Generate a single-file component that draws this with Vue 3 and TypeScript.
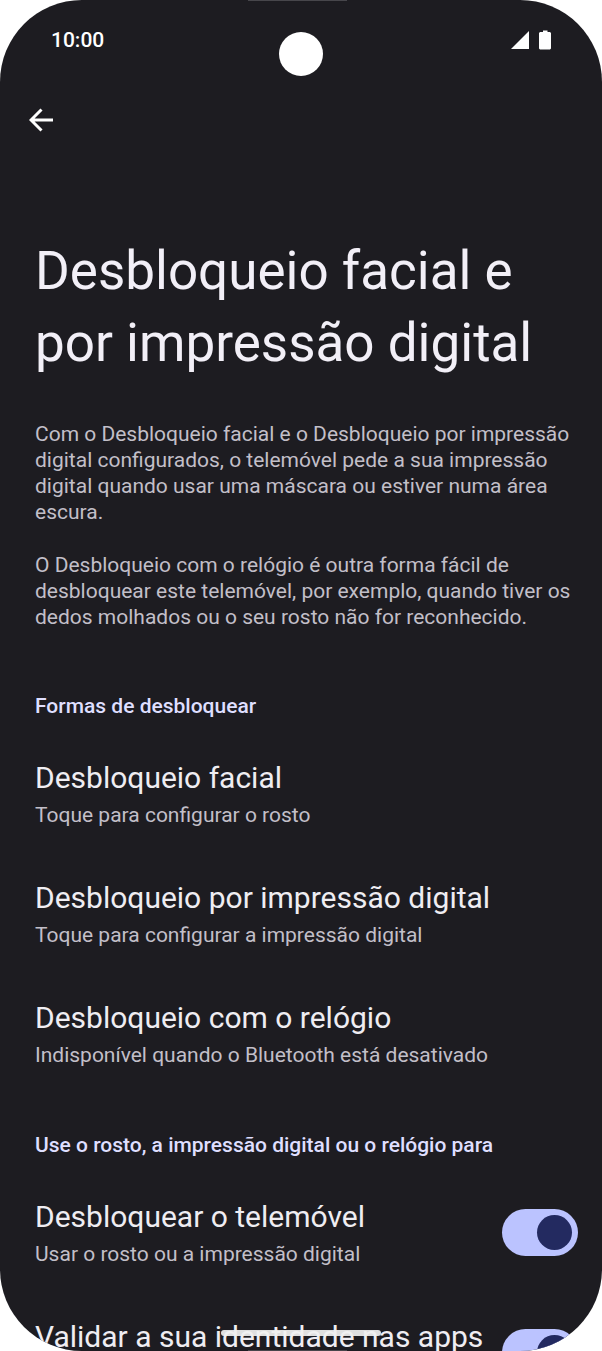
<script setup lang="ts">
import { ref } from 'vue'

interface Method {
  title: string
  summary: string
}
interface Usage {
  id: string
  title: string
  summary?: string
  enabled: boolean
}

const methods: Method[] = [
  { title: 'Desbloqueio facial', summary: 'Toque para configurar o rosto' },
  { title: 'Desbloqueio por impressão digital', summary: 'Toque para configurar a impressão digital' },
  { title: 'Desbloqueio com o relógio', summary: 'Indisponível quando o Bluetooth está desativado' },
]

const usages = ref<Usage[]>([
  { id: 'unlock-phone', title: 'Desbloquear o telemóvel', summary: 'Usar o rosto ou a impressão digital', enabled: true },
  { id: 'verify-apps', title: 'Validar a sua identidade nas apps', enabled: true },
])
</script>

<template>
  <div class="phone">
    <header class="status">
      <time class="clock">10:00</time>
      <div class="status-icons">
        <svg width="18" height="18" viewBox="0 0 18 18" aria-hidden="true"><path d="M18 0v18H0z" fill="#fff" /></svg>
        <svg width="12" height="20" viewBox="0 0 12 20" aria-hidden="true">
          <path d="M4 .5h4.500V2H11l1 1v15.500l-1 1H1l-1-1V3l1-1h3z" fill="#fff" />
        </svg>
      </div>
    </header>
    <span class="speaker"></span>
    <span class="camera"></span>

    <nav class="toolbar">
      <button class="back" type="button" aria-label="Voltar">
        <svg width="24" height="24" viewBox="0 0 24 24" fill="none" stroke="#fff" stroke-width="3" aria-hidden="true">
          <path d="M12.500 1.500 2 12l10.500 10.500M2.500 12H24" />
        </svg>
      </button>
    </nav>

    <main class="content">
      <h1>Desbloqueio facial e por impressão digital</h1>
      <div class="intro">
        <p>Com o Desbloqueio facial e o Desbloqueio por impressão digital configurados, o telemóvel pede a sua impressão digital quando usar uma máscara ou estiver numa área escura.</p>
        <p>O Desbloqueio com o relógio é outra forma fácil de desbloquear este telemóvel, por exemplo, quando tiver os dedos molhados ou o seu rosto não for reconhecido.</p>
      </div>

      <section>
        <h2>Formas de desbloquear</h2>
        <div class="list">
          <button v-for="m in methods" :key="m.title" class="item" type="button">
            <span class="title">{{ m.title }}</span>
            <span class="summary">{{ m.summary }}</span>
          </button>
        </div>
      </section>

      <section>
        <h2>Use o rosto, a impressão digital ou o relógio para</h2>
        <div class="list">
          <div v-for="u in usages" :key="u.id" class="row">
            <label class="item" :for="u.id">
              <span class="title">{{ u.title }}</span>
              <span v-if="u.summary" class="summary">{{ u.summary }}</span>
            </label>
            <input :id="u.id" v-model="u.enabled" class="switch" type="checkbox" role="switch" />
          </div>
        </div>
      </section>
    </main>

    <span class="home-bar"></span>
    <span class="bottom-edge"></span>
  </div>
</template>

<style>
body {
  margin: 0;
  background: #fff;
}
</style>

<style scoped>
.phone {
  position: relative;
  box-sizing: border-box;
  height: 100vh;
  overflow: hidden;
  border-radius: 82px;
  background: #1d1c21;
  color: #f2eff7;
  font-family: Roboto, "Noto Sans", sans-serif;
}
.status {
  display: flex;
  align-items: center;
  justify-content: space-between;
  height: 80px;
  padding: 0 51px;
}
.clock {
  color: #fff;
  font-size: 21px;
  font-weight: 500;
  line-height: 24px;
}
.status-icons {
  display: flex;
  align-items: center;
  gap: 10px;
}
.status-icons svg {
  display: block;
}
.camera {
  position: absolute;
  top: 32px;
  left: 50%;
  width: 44px;
  height: 44px;
  border-radius: 50%;
  background: #fff;
  transform: translateX(-50%);
}
.speaker,
.bottom-edge {
  position: absolute;
  right: 255px;
  left: 248px;
  height: 1px;
  background: #47464b;
}
.speaker {
  top: 0;
}
.bottom-edge {
  bottom: 0;
}
.toolbar {
  display: flex;
  height: 80px;
  align-items: center;
  padding-left: 17px;
}
.back {
  display: grid;
  place-items: center;
  width: 48px;
  height: 48px;
  padding: 0;
  border: 0;
  background: none;
}
.content {
  padding: 75px 24px 0 35px;
}
h1 {
  margin: 0;
  font-size: 53px;
  font-weight: 400;
  line-height: 72px;
}
.intro {
  display: grid;
  gap: 27px;
  margin-top: 42px;
  margin-right: -8px;
  color: #c2bfc8;
  font-size: 21px;
  line-height: 26px;
}
p {
  margin: 0;
}
section {
  margin-top: 63px;
}
section + section {
  margin-top: 64px;
}
h2 {
  margin: 0 0 40px;
  color: #dfdfff;
  font-size: 21px;
  font-weight: 500;
  line-height: 26px;
}
.list {
  display: grid;
  gap: 51px;
}
.item {
  display: flex;
  flex-direction: column;
  gap: 5px;
  min-height: 69px;
  padding: 0;
  border: 0;
  background: none;
  color: #efedf2;
  font: inherit;
  text-align: left;
}
.title {
  font-size: 30px;
  line-height: 38px;
}
.summary {
  color: #c2bfc8;
  font-size: 21px;
  line-height: 26px;
}
.row {
  display: flex;
  align-items: center;
  justify-content: space-between;
}
.switch {
  flex: none;
  display: grid;
  align-items: center;
  justify-content: start;
  box-sizing: border-box;
  width: 76px;
  height: 47px;
  margin: 0;
  padding: 6px;
  border-radius: 24px;
  background: #47464f;
  appearance: none;
}
.switch::before {
  content: "";
  width: 35px;
  height: 35px;
  border-radius: 50%;
  background: #918f9a;
}
.switch:checked {
  justify-content: end;
  background: #bbc3ff;
}
.switch:checked::before {
  background: #232a60;
}
.home-bar {
  position: absolute;
  bottom: 15px;
  left: 50%;
  width: 160px;
  height: 6px;
  border-radius: 3px;
  background: rgb(240 240 240 / 92%);
  transform: translateX(-50%);
}
</style>
